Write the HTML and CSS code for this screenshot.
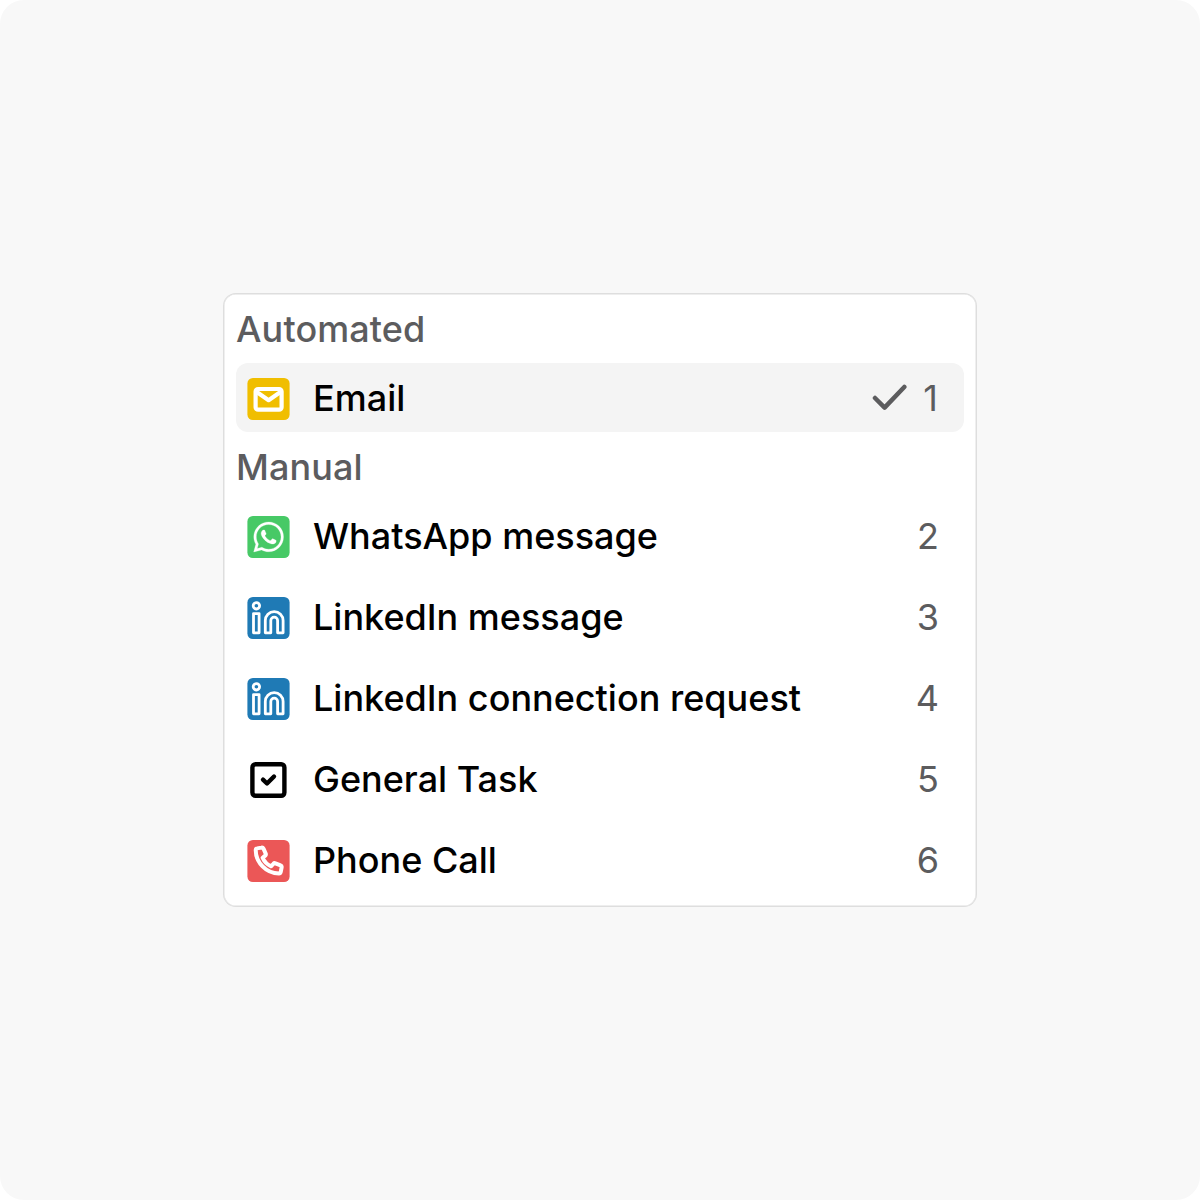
FILE: index.html
```
<!DOCTYPE html>
<html lang="en">
<head>
  <meta charset="UTF-8" />
  <meta name="viewport" content="width=device-width, initial-scale=1" />
  <title>Step type</title>
  <link rel="stylesheet" href="styles.css">
</head>
<body>
  <main class="stage">
    <div class="menu" role="listbox">
      <h2 class="menu-label">Automated</h2>
      <ul class="menu-group">
        <li class="menu-item selected">
          <svg class="icon" viewBox="-0.4 0 43 43">
            <rect width="42.2" height="42" rx="5.5" fill="#f0be00" />
            <g fill="none" stroke="#fff" stroke-width="4.2" stroke-linejoin="round">
              <rect x="8.2" y="11" width="26" height="20.7" rx="2.5" />
              <path d="M9 13.8l12.2 8.4L33.4 13.8" />
            </g>
          </svg>
          <span class="name">Email</span>
          <svg class="check" viewBox="0 0 36 30">
            <path d="M4 16l9.600 9.600L33.300 5" />
          </svg>
          <span class="key">1</span>
        </li>
      </ul>

      <h2 class="menu-label">Manual</h2>
      <ul class="menu-group">
        <li class="menu-item">
          <svg class="icon" viewBox="-0.4 0 43 43">
            <rect width="42.2" height="42" rx="5.5" fill="#47c966" />
            <g fill="#fff" stroke="#fff" stroke-width="0.2" transform="translate(6.2 6) scale(1.25)">
              <path d="M.057 24l1.687-6.163c-1.041-1.804-1.588-3.849-1.587-5.946.003-6.556 5.338-11.891 11.893-11.891 3.181.001 6.167 1.24 8.413 3.488 2.245 2.248 3.481 5.236 3.48 8.414-.003 6.557-5.338 11.892-11.893 11.892-1.99-.001-3.951-.5-5.688-1.448l-6.305 1.654zm6.597-3.807c1.676.995 3.276 1.591 5.392 1.592 5.448 0 9.886-4.434 9.889-9.885.002-5.462-4.415-9.89-9.881-9.892-5.452 0-9.887 4.434-9.889 9.884-.001 2.225.651 3.891 1.746 5.634l-.999 3.648 3.742-.981z" />
              <path d="M17.472 14.382c-.297-.149-1.758-.867-2.03-.967-.273-.099-.471-.148-.67.15-.197.297-.767.966-.94 1.164-.173.199-.347.223-.644.075-.297-.15-1.255-.463-2.39-1.475-.883-.788-1.48-1.761-1.653-2.059-.173-.297-.018-.458.13-.606.134-.133.298-.347.446-.52.149-.174.198-.298.298-.497.099-.198.05-.371-.025-.52-.075-.149-.669-1.612-.916-2.207-.242-.579-.487-.5-.669-.51-.173-.008-.371-.01-.57-.01-.198 0-.52.074-.792.372-.272.297-1.04 1.016-1.04 2.479 0 1.462 1.065 2.875 1.213 3.074.149.198 2.096 3.2 5.077 4.487.709.306 1.262.489 1.694.625.712.227 1.36.195 1.871.118.571-.085 1.758-.719 2.006-1.413.248-.694.248-1.289.173-1.413-.074-.124-.272-.198-.57-.347z" />
            </g>
          </svg>
          <span class="name">WhatsApp message</span>
          <span class="key">2</span>
        </li>
        <li class="menu-item">
          <svg class="icon" viewBox="-0.4 0 43 43">
            <rect width="42.2" height="42" rx="5.5" fill="#1f7ab5" />
            <g fill="none" stroke="#fff" stroke-width="2.8" stroke-linejoin="round">
              <circle cx="9" cy="8.8" r="3.2" />
              <rect x="6.1" y="16.6" width="5.6" height="19.2" />
              <path d="M17.9 35.8V23.6a8.9 8.9 0 0 1 17.8 0v12.2h-5.5V23.6a3.4 3.4 0 0 0-6.8 0v12.2z" />
            </g>
          </svg>
          <span class="name">LinkedIn message</span>
          <span class="key">3</span>
        </li>
        <li class="menu-item">
          <svg class="icon" viewBox="-0.4 0 43 43">
            <rect width="42.2" height="42" rx="5.5" fill="#1f7ab5" />
            <g fill="none" stroke="#fff" stroke-width="2.8" stroke-linejoin="round">
              <circle cx="9" cy="8.8" r="3.2" />
              <rect x="6.1" y="16.6" width="5.6" height="19.2" />
              <path d="M17.9 35.8V23.6a8.9 8.9 0 0 1 17.8 0v12.2h-5.5V23.6a3.4 3.4 0 0 0-6.8 0v12.2z" />
            </g>
          </svg>
          <span class="name">LinkedIn connection request</span>
          <span class="key">4</span>
        </li>
        <li class="menu-item">
          <svg class="icon" viewBox="-0.4 0 43 43">
            <g fill="none" stroke="#000" stroke-width="4.4" stroke-linecap="round" stroke-linejoin="round">
              <rect x="5" y="5.2" width="32" height="31.6" rx="3.2" />
              <path d="M15.6 20.7l4 3.8 7-7" />
            </g>
          </svg>
          <span class="name">General Task</span>
          <span class="key">5</span>
        </li>
        <li class="menu-item">
          <svg class="icon" viewBox="-0.4 0 43 43">
            <rect width="42.2" height="42" rx="5.5" fill="#eb5757" />
            <path d="M9.7 8.4l4.300-.8c.9-.2 1.700.2 2.100 1l2.200 5c.3.7.1 1.500-.5 2l-2.600 2.100c1.600 3.700 4.900 7 8.600 8.600l2.200-2.500c.5-.6 1.300-.8 2-.5l5.200 2.100c.8.300 1.200 1.200 1 2.100l-.9 4.600c-.2.800-.9 1.400-1.700 1.400C18.800 33.500 8.300 22.500 8.300 10c0-.8.600-1.500 1.400-1.600z" fill="none" stroke="#fff" stroke-width="4" stroke-linejoin="round" />
          </svg>
          <span class="name">Phone Call</span>
          <span class="key">6</span>
        </li>
      </ul>
    </div>
  </main>
</body>
</html>
```
FILE: styles.css
```
* {
  margin: 0;
  padding: 0;
  box-sizing: border-box;
}

body {
  background: #fff;
  font-family: Inter, sans-serif;
}

.stage {
  display: flex;
  justify-content: center;
  align-items: center;
  height: 100vh;
  background: #f8f8f8;
  border-radius: 24px;
}

.menu {
  width: 752px;
  height: 612px;
  padding: 0 12px;
  background: #fff;
  border-radius: 12px;
  box-shadow: 0 0 0 1px #dedede, inset 0 0 0 0.5px #dedede;
}

.menu-label {
  height: 69px;
  line-height: 70px;
  font-size: 36px;
  font-weight: 500;
  letter-spacing: 0.1px;
  color: #5c5c5e;
}

.menu-group {
  display: flex;
  flex-direction: column;
  gap: 12px;
  list-style: none;
}

.menu-item {
  display: flex;
  align-items: center;
  height: 69px;
  padding: 0 25px 0 11px;
  border-radius: 12px;
  font-size: 36px;
}

.selected {
  background: #f4f4f4;
}

.icon {
  width: 43px;
  height: 43px;
  margin: 3px 23px 0 0;
}

.name {
  flex: 1;
  font-weight: 500;
  color: #000;
}

.check {
  width: 36px;
  height: 30px;
  margin: -2px 16px 0 0;
  fill: none;
  stroke: #5c5c5e;
  stroke-width: 4.5;
  stroke-linecap: round;
  stroke-linejoin: round;
}

.key {
  color: #5c5c5e;
}

.selected .key {
  margin-right: 1px;
}
```
